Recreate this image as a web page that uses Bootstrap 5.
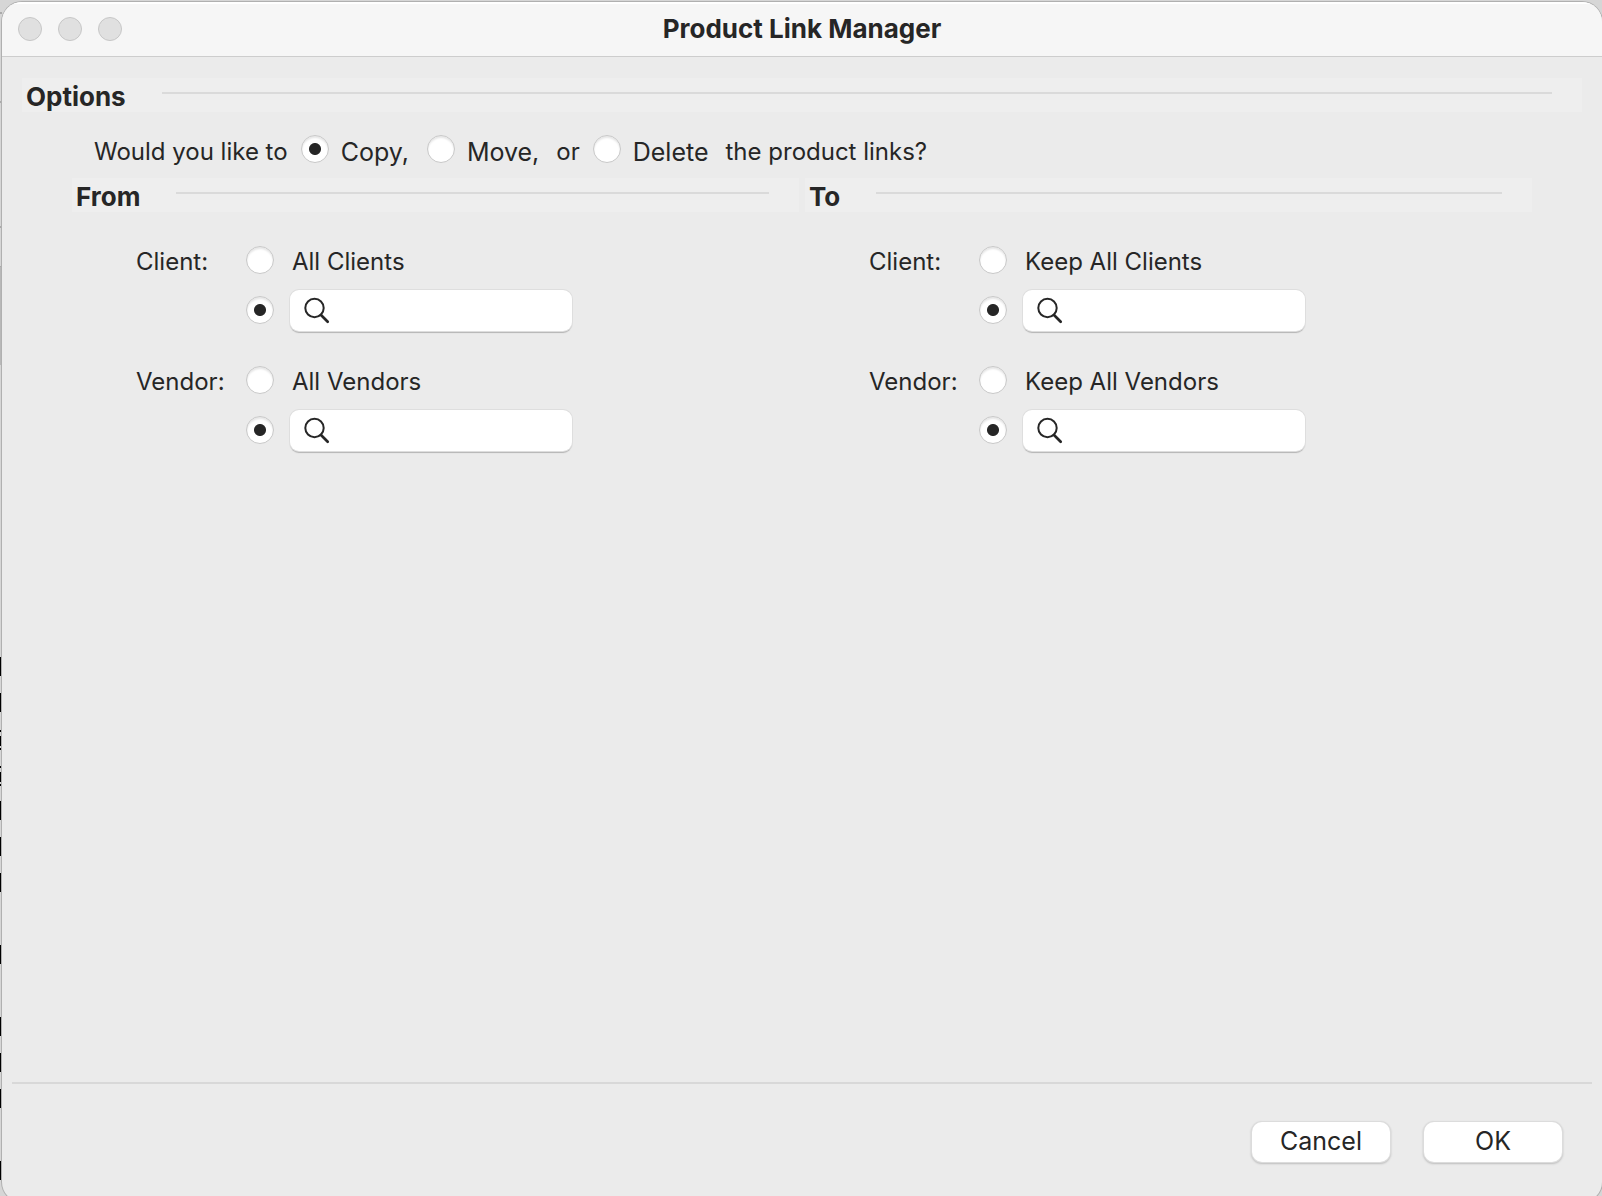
<!DOCTYPE html>
<html lang="en">
<head>
<meta charset="utf-8">
<meta name="viewport" content="width=device-width, initial-scale=1">
<title>Product Link Manager</title>
<link href="https://cdn.jsdelivr.net/npm/bootstrap@5.3.0/dist/css/bootstrap.min.css" rel="stylesheet">
<style>
  body { font-family: Inter, "Liberation Sans", sans-serif; font-size: 24px; line-height: 32px; color: #262626; background: #d6d6d6; }
  .desktop { height: 100vh; padding: 2px 0 0 2px; }
  .backdrop { left: 0; top: 0; width: 2px; height: 1196px; }
  .app-window { height: calc(100vh + 4px); background: #ebebeb; border-radius: 20px; box-shadow: 0 0 0 1px #b0b0b0; }
  .title-bar { height: 55px; background: #f6f6f6; border-bottom: 1px solid #cdcdcd; box-shadow: inset 0 2px 0 #fff; padding: 0 16px; }
  .title-bar h1, .section-head h2 { font-size: 26px; line-height: 34px; font-weight: 700; margin: 0; }
  .lights { gap: 16px; flex: 1; }
  .light { width: 24px; height: 24px; border-radius: 50%; background: #e0e0e0; border: 1px solid #c6c6c6; padding: 0; }
  .content { padding: 21px 20px 0; }
  .section-head { height: 34px; background: #eee; padding: 0 30px 0 4px; gap: 36px; }
  .section-head h2 { padding-top: 2px; }
  .section-rule { flex: 1; height: 2px; background: #dadada; margin-top: 14px; }
  .question { padding: 23px 0 0 72px; height: 66px; }
  .question > span, .question > label { padding-top: 1px; }
  .question .mac-radio { margin: 0 12px 0 13px; }
  .big-label { font-size: 25px; }
  .question .big-label { margin-right: 5px; }
  .question .big-label + span { margin-left: 12px; }
  .panels { padding: 0 50px; gap: 4px; }
  .panel { flex: 1; }
  .panel:first-child { padding-right: 2px; }
  .choices { padding: 31px 0 0 64px; }
  .choice-group { display: grid; grid-template-columns: 94px 28px 282px; column-gap: 16px; grid-template-rows: 34px 40px; row-gap: 13px; align-items: center; margin-bottom: 33px; }
  .choice-group > span, .choice-label { padding-top: 4px; }
  .choice-label { padding-left: 2px; }
  .form-check-input.mac-radio { width: 28px; height: 28px; margin: 0; flex: none; background-color: #fff; border: 1px solid #c8c8c8; box-shadow: inset 0 2px 2px #e6e6e6; }
  .question .form-check-input.mac-radio { margin: 0 12px 0 13px; }
  .form-check-input.mac-radio:checked { background-color: #fff; background-image: radial-gradient(circle, #262626 5.5px, transparent 6.5px); background-size: 100% 100%; border-color: #c8c8c8; }
  .search-wrap .form-control { height: 41px; border: 0; border-radius: 9px; padding: 0 12px 0 48px; font-size: 24px; box-shadow: 0 0 0 1px #dedede, 0 2px 1px #b4b4b4; }
  .search-icon { left: 14px; top: 7px; width: 26px; height: 27px; }
  .footer-bar { margin: 0 10px; border-top: 2px solid #d8d8d8; padding: 38px 30px 40px; gap: 34px; }
  .mac-btn { width: 138px; height: 40px; padding: 0 0 2px; border: 0; border-radius: 10px; background: #fff; color: #262626; font-size: 25px; line-height: 38px; box-shadow: 0 0 0 1px #dcdcdc, 0 1px 2px 1px #bdbdbd; }
</style>
</head>
<body class="overflow-hidden">
<div class="desktop position-relative overflow-hidden">
  <svg class="backdrop position-absolute" viewBox="0 0 2 1196" aria-hidden="true">
    <path d="M0 13h2M0 102h2M0 227h2M0 267h2" stroke="#aaa" stroke-width="2"/>
    <path d="M0 267h2v98h-2z" fill="#b8b8b8"/>
    <path d="M0 657h2v19h-2zM0 693h2v19h-2zM0 730h2v2h-2zM0 736h1v9h-1zM0 744h2v2h-2zM0 748h1v2h-1zM0 766h2v2h-2zM0 772h1v9h-1zM0 780h2v2h-2zM0 784h1v2h-1zM0 801h2v19h-2zM0 837h2v19h-2zM0 873h2v19h-2zM0 945h2v19h-2zM0 1017h2v19h-2zM0 1053h2v19h-2zM0 1089h2v19h-2zM0 1161h2v19h-2z" fill="#000"/>
  </svg>
  <div class="app-window position-relative overflow-hidden d-flex flex-column">
    <header class="title-bar d-flex align-items-center">
      <div class="lights d-flex">
        <button class="light" type="button" aria-label="Close"></button>
        <button class="light" type="button" aria-label="Minimize"></button>
        <button class="light" type="button" aria-label="Zoom"></button>
      </div>
      <h1>Product Link Manager</h1>
      <div class="lights"></div>
    </header>

    <main class="content flex-grow-1">
      <div class="section-head d-flex"><h2>Options</h2><div class="section-rule"></div></div>
      <div class="question d-flex align-items-start">
        <span>Would you like to</span>
        <input class="form-check-input mac-radio" type="radio" name="action" id="copy" checked>
        <label class="big-label" for="copy">Copy,</label>
        <input class="form-check-input mac-radio" type="radio" name="action" id="move">
        <label class="big-label" for="move">Move,</label>
        <span>or</span>
        <input class="form-check-input mac-radio" type="radio" name="action" id="delete">
        <label class="big-label" for="delete">Delete</label>
        <span>the product links?</span>
      </div>

      <div class="panels d-flex">
        <section class="panel">
          <div class="section-head d-flex"><h2>From</h2><div class="section-rule"></div></div>
          <div class="choices">
            <div class="choice-group" role="radiogroup" aria-labelledby="fc">
              <span id="fc">Client:</span>
              <input class="form-check-input mac-radio" type="radio" name="from-client" id="fc-all">
              <label class="choice-label" for="fc-all">All Clients</label>
              <span></span>
              <input class="form-check-input mac-radio" type="radio" name="from-client" aria-label="One client" checked>
              <div class="search-wrap position-relative">
                <input class="form-control" type="text" aria-label="From client">
                <svg class="search-icon position-absolute" viewBox="0 0 26 27" fill="none" stroke="#262626" aria-hidden="true"><circle cx="10.5" cy="11" r="9.2" stroke-width="2"/><path d="M17 18l6.7 6.7" stroke-width="2.7" stroke-linecap="round"/></svg>
              </div>
            </div>
            <div class="choice-group" role="radiogroup" aria-labelledby="fv">
              <span id="fv">Vendor:</span>
              <input class="form-check-input mac-radio" type="radio" name="from-vendor" id="fv-all">
              <label class="choice-label" for="fv-all">All Vendors</label>
              <span></span>
              <input class="form-check-input mac-radio" type="radio" name="from-vendor" aria-label="One vendor" checked>
              <div class="search-wrap position-relative">
                <input class="form-control" type="text" aria-label="From vendor">
                <svg class="search-icon position-absolute" viewBox="0 0 26 27" fill="none" stroke="#262626" aria-hidden="true"><circle cx="10.5" cy="11" r="9.2" stroke-width="2"/><path d="M17 18l6.7 6.7" stroke-width="2.7" stroke-linecap="round"/></svg>
              </div>
            </div>
          </div>
        </section>

        <section class="panel">
          <div class="section-head d-flex"><h2>To</h2><div class="section-rule"></div></div>
          <div class="choices">
            <div class="choice-group" role="radiogroup" aria-labelledby="tc">
              <span id="tc">Client:</span>
              <input class="form-check-input mac-radio" type="radio" name="to-client" id="tc-all">
              <label class="choice-label" for="tc-all">Keep All Clients</label>
              <span></span>
              <input class="form-check-input mac-radio" type="radio" name="to-client" aria-label="One client" checked>
              <div class="search-wrap position-relative">
                <input class="form-control" type="text" aria-label="To client">
                <svg class="search-icon position-absolute" viewBox="0 0 26 27" fill="none" stroke="#262626" aria-hidden="true"><circle cx="10.5" cy="11" r="9.2" stroke-width="2"/><path d="M17 18l6.7 6.7" stroke-width="2.7" stroke-linecap="round"/></svg>
              </div>
            </div>
            <div class="choice-group" role="radiogroup" aria-labelledby="tv">
              <span id="tv">Vendor:</span>
              <input class="form-check-input mac-radio" type="radio" name="to-vendor" id="tv-all">
              <label class="choice-label" for="tv-all">Keep All Vendors</label>
              <span></span>
              <input class="form-check-input mac-radio" type="radio" name="to-vendor" aria-label="One vendor" checked>
              <div class="search-wrap position-relative">
                <input class="form-control" type="text" aria-label="To vendor">
                <svg class="search-icon position-absolute" viewBox="0 0 26 27" fill="none" stroke="#262626" aria-hidden="true"><circle cx="10.5" cy="11" r="9.2" stroke-width="2"/><path d="M17 18l6.7 6.7" stroke-width="2.7" stroke-linecap="round"/></svg>
              </div>
            </div>
          </div>
        </section>
      </div>
    </main>

    <footer class="footer-bar d-flex justify-content-end">
      <button class="btn mac-btn" type="button">Cancel</button>
      <button class="btn mac-btn" type="button">OK</button>
    </footer>
  </div>
</div>
<script src="https://cdn.jsdelivr.net/npm/bootstrap@5.3.0/dist/js/bootstrap.bundle.min.js"></script>
</body>
</html>
